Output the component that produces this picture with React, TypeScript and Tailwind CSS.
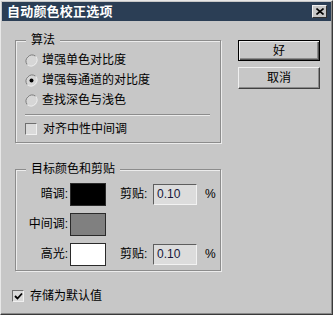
import React from "react";

const FONT = "font-['Liberation_Sans','Noto_Sans_CJK_SC',sans-serif]";

function Radio({ checked, label }: { checked?: boolean; label: string }) {
  return (
    <div className="flex items-center h-[20px]">
      <svg width="13" height="13" viewBox="0 0 13 13" className="shrink-0">
        <circle cx="6.5" cy="6.5" r="6" fill="#d6d6d6" />
        <path d="M2.3 10.7 A6 6 0 0 1 10.7 2.3" fill="none" stroke="#7a7a7a" strokeWidth="1" />
        <path d="M10.7 2.3 A6 6 0 0 1 2.3 10.7" fill="none" stroke="#ececec" strokeWidth="1" />
        {checked && <circle cx="6.5" cy="6.5" r="2" fill="#000" />}
      </svg>
      <span className="ml-[4px] text-[12px] text-black leading-none">{label}</span>
    </div>
  );
}

function Check({ checked }: { checked?: boolean }) {
  return (
    <div className="w-[12px] h-[12px] shrink-0 bg-[#dadada] border border-t-[#6f6f6f] border-l-[#6f6f6f] border-r-[#f0f0f0] border-b-[#f0f0f0] flex items-center justify-center">
      {checked && (
        <svg width="9" height="9" viewBox="0 0 9 9">
          <path d="M1 4 L3.5 6.5 L8 1.5" fill="none" stroke="#000" strokeWidth="1.8" />
        </svg>
      )}
    </div>
  );
}

function GroupBox({ title, className, children }: { title: string; className: string; children: React.ReactNode }) {
  return (
    <div className={`relative border border-[#8c8c8c] shadow-[inset_1px_1px_0_#ececec,1px_1px_0_#ececec] ${className}`}>
      <span className="absolute -top-[8px] left-[10px] px-[5px] bg-[#c7c7c7] text-[12px] leading-[14px] text-black">
        {title}
      </span>
      {children}
    </div>
  );
}

function ClipField() {
  return (
    <div className="flex items-center">
      <span className="w-[33px] text-[12px] text-black">剪贴:</span>
      <div className="w-[44px] h-[21px] bg-[#dcdcdc] border border-t-[#5e5e5e] border-l-[#5e5e5e] border-r-[#f2f2f2] border-b-[#f2f2f2] flex items-center pl-[3px] text-[12px] text-[#16163a]">
        0.10
      </div>
      <span className="ml-[8px] text-[12px] text-black">%</span>
    </div>
  );
}

function SwatchRow({ label, color, clip }: { label: string; color: string; clip?: boolean }) {
  return (
    <div className="flex items-center h-[22px]">
      <span className="w-[52px] text-right text-[12px] text-black">{label}</span>
      <div className={`ml-[2px] w-[36px] h-[23px] border border-[#2a2a2a] ${color}`} />
      <div className="ml-[14px]">{clip && <ClipField />}</div>
    </div>
  );
}

export default function App() {
  return (
    <div
      className={`w-[333px] h-[315px] bg-[#c7c7c7] border border-t-[#e8e8e8] border-l-[#e8e8e8] border-r-[#3a3a3a] border-b-[#3a3a3a] shadow-[inset_-1px_-1px_0_#8a8a8a] flex flex-col ${FONT}`}
    >
      <div className="mx-[1px] mt-[1px] h-[19px] bg-[#2b3e55] flex items-center justify-between pl-[5px] pr-[4px]">
        <span className="text-white font-bold text-[13px] leading-none tracking-[0.2px]">自动颜色校正选项</span>
        <div className="w-[15px] h-[13px] bg-[#c7c7c7] border border-t-[#f0f0f0] border-l-[#f0f0f0] border-r-[#303030] border-b-[#303030] flex items-center justify-center">
          <svg width="8" height="7" viewBox="0 0 8 7">
            <path d="M0.5 0.5 L7.5 6.5 M7.5 0.5 L0.5 6.5" stroke="#000" strokeWidth="1.6" />
          </svg>
        </div>
      </div>

      <div className="flex pl-[14px] pt-[19px]">
        <div className="flex flex-col w-[206px]">
          <GroupBox title="算法" className="h-[103px] pt-[9px] pl-[9px] pr-[10px]">
            <Radio label="增强单色对比度" />
            <Radio checked label="增强每通道的对比度" />
            <Radio label="查找深色与浅色" />
            <div className="mt-[4px] h-[2px] border-t border-[#8c8c8c] border-b border-b-[#ececec]" />
            <div className="flex items-center mt-[7px]">
              <Check />
              <span className="ml-[6px] text-[12px] text-black leading-none">对齐中性中间调</span>
            </div>
          </GroupBox>

          <GroupBox title="目标颜色和剪贴" className="mt-[26px] h-[102px] pt-[13px] flex flex-col gap-[8px]">
            <SwatchRow label="暗调:" color="bg-black" clip />
            <SwatchRow label="中间调:" color="bg-[#808080]" />
            <SwatchRow label="高光:" color="bg-white" clip />
          </GroupBox>

          <div className="flex items-center mt-[19px] -ml-[3px]">
            <Check checked />
            <span className="ml-[6px] text-[12px] text-black leading-none">存储为默认值</span>
          </div>
        </div>

        <div className="ml-[17px] flex flex-col gap-[6px]">
          <button className="w-[82px] h-[21px] border border-black bg-[#c7c7c7] shadow-[inset_1px_1px_0_#f0f0f0,inset_-1px_-1px_0_#505050,inset_-2px_-2px_0_#8a8a8a] text-[12px] text-black">
            好
          </button>
          <button className="w-[82px] h-[22px] bg-[#c7c7c7] border border-t-[#f0f0f0] border-l-[#f0f0f0] border-r-[#404040] border-b-[#404040] shadow-[inset_-1px_-1px_0_#8a8a8a] text-[12px] text-black">
            取消
          </button>
        </div>
      </div>
    </div>
  );
}
